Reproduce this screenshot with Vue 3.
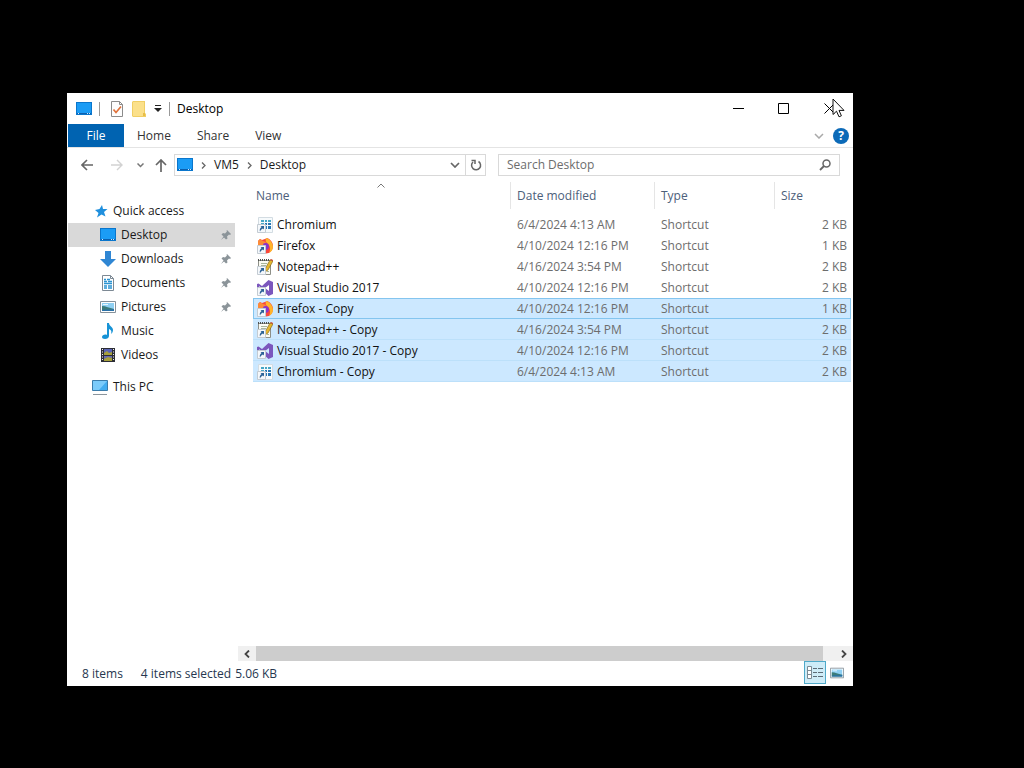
<script setup>
import { computed, ref } from "vue";

const tabs = ["Home", "Share", "View"];
const path = ["VM5", "Desktop"];

const places = [
  { name: "Desktop", icon: "desktop", pinned: true, active: true },
  { name: "Downloads", icon: "downloads", pinned: true },
  { name: "Documents", icon: "documents", pinned: true },
  { name: "Pictures", icon: "pictures", pinned: true },
  { name: "Music", icon: "music" },
  { name: "Videos", icon: "videos" },
];

const files = ref([
  { name: "Chromium", icon: "chromium", date: "6/4/2024 4:13 AM", size: 2 },
  { name: "Firefox", icon: "firefox", date: "4/10/2024 12:16 PM", size: 1 },
  { name: "Notepad++", icon: "notepad", date: "4/16/2024 3:54 PM", size: 2 },
  { name: "Visual Studio 2017", icon: "vs", date: "4/10/2024 12:16 PM", size: 2 },
  { name: "Firefox - Copy", icon: "firefox", date: "4/10/2024 12:16 PM", size: 1, selected: true, focused: true },
  { name: "Notepad++ - Copy", icon: "notepad", date: "4/16/2024 3:54 PM", size: 2, selected: true },
  { name: "Visual Studio 2017 - Copy", icon: "vs", date: "4/10/2024 12:16 PM", size: 2, selected: true },
  { name: "Chromium - Copy", icon: "chromium", date: "6/4/2024 4:13 AM", size: 2, selected: true },
]);

const search = ref("");
const selectedCount = computed(() => files.value.filter((f) => f.selected).length);

function select(file) {
  for (const f of files.value) {
    f.selected = f === file;
    f.focused = f === file;
  }
}
</script>

<template>
  <!-- shared icon shapes -->
  <svg class="sprite" aria-hidden="true">
    <symbol id="desktop" viewBox="0 0 16 16">
      <path d="M0 1h16v13H0z" fill="#0a76cc" />
      <path d="M1 2h14v10H1z" fill="#1b9cf5" />
      <path d="M1 12h14v1H1z" fill="#0b5fae" />
      <path d="M2 12h1v1H2zM11 12h1v1h-1zM13 12h1v1h-1z" fill="#cdeaff" />
    </symbol>
    <symbol id="downloads" viewBox="0 0 16 16">
      <path d="M5 0h6v8h5l-8 8-8-8h5z" fill="#2f86d3" />
    </symbol>
    <symbol id="documents" viewBox="0 0 16 16">
      <path d="M2.500.5h8l3 3v12h-11z" fill="#fff" stroke="#7d8994" />
      <path d="M10.500.5v3h3" fill="none" stroke="#7d8994" />
      <path d="M4 4.500h2M7 4.500h3M4 6.500h3M8 6.500h4M4 8.500h8M4 11h3M8 11h4M4 13h3M8 13h4" stroke="#2b93d1" stroke-width="1.300" />
    </symbol>
    <symbol id="pictures" viewBox="0 0 16 16">
      <path d="M.5 2.500h15v11H.5z" fill="#fff" stroke="#85919a" />
      <path d="M2 4h12v8H2z" fill="#8fd0f3" />
      <path d="M2 7c4 0 7 2 12 3v2H2z" fill="#3c7c7a" />
      <path d="M2 11c5-1 8 0 12-1v2H2z" fill="#2870a8" />
      <path d="M3 5h5v1H3z" fill="#eaf7fd" />
    </symbol>
    <symbol id="music" viewBox="0 0 16 16">
      <path d="M7 0h2c0 3 4 4 4 7 0 2-1 3-2 4 1-3 0-4-2-5v7c0 2-2 3-4 3s-3-1-3-2c0-2 3-3 5-2z" fill="#1793d6" />
    </symbol>
    <symbol id="videos" viewBox="0 0 16 16">
      <path d="M1 1h14v14H1z" fill="#2c2d35" />
      <path d="M4 2h8v6H4z" fill="#5a64b5" />
      <path d="M4 9h8v5H4z" fill="#676bb0" />
      <path d="M4 6l3-2 2 2 3-1v3H4zM4 12l4-2 4 1v3H4z" fill="#a6a03c" />
      <path d="M2.500 2v12M13.500 2v12" stroke="#f3f3f3" stroke-dasharray="1 1.500" />
    </symbol>
    <symbol id="pc" viewBox="0 0 16 16">
      <path d="M.5 1.500h15v10H.5z" fill="#43adf0" stroke="#3a7cab" />
      <path d="M1 2h14L7 11H1z" fill="#7bcbfa" />
      <path d="M1 15.500h14" stroke="#8b959c" />
    </symbol>
    <symbol id="star" viewBox="0 0 14 14">
      <path d="M8 1l1 4 4.500 0-3.500 3 1.500 4.500L7.500 10.500 3 13.500l1.500-4.500L1 6l4.500-1z" fill="#1f8fdd" />
    </symbol>
    <symbol id="pin" viewBox="0 0 12 12">
      <path d="M7 1l4 4-1 1-1-.5-2 2 .5 2L6 10.500 4 8.500 1 11l2.500-3.500-2-2L3 4l2 .5 2-2L6.500 2z" fill="#8b9499" />
    </symbol>
    <symbol id="shortcut" viewBox="0 0 16 16">
      <path d="M.5 7.500h8v8h-8z" fill="#f5f8fb" stroke="#c3cbd2" />
      <path d="M3.500 9H7v3.500L6 11.500c-1.500.5-2.500 1.500-3 3-.7-1.700 0-3.500 1.500-4.500z" fill="#2c6296" />
    </symbol>
    <symbol id="chromium" viewBox="0 0 16 16">
      <path d="M1.500.5h14v15h-14z" fill="#f6fafc" stroke="#d3dce2" />
      <path d="M4 3h3v2H4zM8 3h2v2H8zM11 3h3v2h-3zM4 6h3v2H4z" fill="#45a6c6" />
      <path d="M8 6h2v2H8zM11 6h3v2h-3zM8 9h2v3H8zM11 9h3v3h-3z" fill="#2776b4" />
      <use href="#shortcut" />
    </symbol>
    <symbol id="firefox" viewBox="0 0 16 16">
      <path d="M1 3l2-2 2 1c2-1 4-1 5-2 3 1 6 4 6 8s-3 7.500-7 7.500S1 13 1 8z" fill="#f8463c" />
      <path d="M9 0c4 1 7 5 7 9 0 3-2 5-4 6 2-4 1-7-1-9C9 4 8 3 9 0z" fill="#ffb52c" />
      <path d="M1 3l2-2 3 2 3 1-2 3H1z" fill="#fc8b38" />
      <path d="M6 6c2-2 6-1 6 2s-2 4-4 4z" fill="#8a35c9" />
      <use href="#shortcut" />
    </symbol>
    <symbol id="notepad" viewBox="0 0 16 16">
      <path d="M1.500 1.500h12v14h-12z" fill="#fbfbf3" stroke="#8d8f88" />
      <path d="M1 1h12" stroke="#4f5250" stroke-width="2" stroke-dasharray="1 1" />
      <path d="M4 4.500h6M4 6.500h5M10 12.500h2" stroke="#a9b69c" />
      <path d="M8 10l5-9 3 1-5 9-3 2z" fill="#e5b62f" stroke="#776018" stroke-width=".6" />
      <path d="M13 1l1-1 2 1v1z" fill="#c9442f" />
      <use href="#shortcut" />
    </symbol>
    <symbol id="vs" viewBox="0 0 16 16">
      <path d="M11.500 0L16 2v12l-4.500 2L5 10l-3.500 2.500L0 12V4l1.500-.5L5 6zM12 5L8 8l4 3zM2 6v4l2-2z" fill="#7b57bd" fill-rule="evenodd" />
      <use href="#shortcut" />
    </symbol>
  </svg>

  <div class="screen">
    <main class="window">
      <header class="titlebar">
        <svg class="icon"><use href="#desktop" /></svg>
        <span class="divider"></span>
        <button class="tool properties" aria-label="Properties">
          <svg width="14" height="16" viewBox="0 0 14 16">
            <path d="M1.500.5h8l3 3v12h-11z" fill="#fdfdfd" stroke="#8b8b8b" />
            <path d="M9.500.5v3h3" fill="none" stroke="#8b8b8b" />
            <path d="M3.500 8.500l2.500 3 5-6" fill="none" stroke="#e0713a" stroke-width="1.700" />
          </svg>
        </button>
        <button class="tool" aria-label="New folder">
          <svg width="14" height="16" viewBox="0 0 14 16">
            <path d="M0 1l1-1h12v12l1 1v3H1l-1-1z" fill="#f0ce63" />
            <path d="M1 1h11v14H1z" fill="#fbe08a" />
            <path d="M11 12h2v3h-2z" fill="#e8bd47" />
          </svg>
        </button>
        <button class="tool more" aria-label="Customize Quick Access Toolbar">
          <svg width="8" height="7" viewBox="0 0 8 7"><path d="M1 0h6v1H1zM0 3h8L4 7z" fill="#222" /></svg>
        </button>
        <span class="divider"></span>
        <h1>Desktop</h1>
        <div class="controls">
          <button aria-label="Minimize">
            <svg width="11" height="11"><path d="M0 5.500h11" stroke="#000" /></svg>
          </button>
          <button aria-label="Maximize">
            <svg width="11" height="11"><path d="M.5.5h10v10H.5z" fill="none" stroke="#000" /></svg>
          </button>
          <button aria-label="Close">
            <svg width="11" height="11"><path d="M.5.5l10 10M10.500.5l-10 10" stroke="#000" /></svg>
          </button>
        </div>
      </header>

      <nav class="ribbon">
        <button class="file">File</button>
        <button v-for="tab in tabs" :key="tab">{{ tab }}</button>
        <div class="ribbon-end">
          <button aria-label="Expand the Ribbon">
            <svg width="10" height="6" viewBox="0 0 10 6"><path d="M1 1l4 4 4-4" fill="none" stroke="#a9a9a9" stroke-width="1.500" /></svg>
          </button>
          <button class="help" aria-label="Help">?</button>
        </div>
      </nav>

      <div class="navbar">
        <div class="history">
          <button aria-label="Back">
            <svg width="12" height="12" viewBox="0 0 12 12"><path d="M12 6H1M6 1L1 6l5 5" fill="none" stroke="#666" stroke-width="1.600" /></svg>
          </button>
          <button aria-label="Forward">
            <svg width="12" height="12" viewBox="0 0 12 12"><path d="M0 6h11M6 1l5 5-5 5" fill="none" stroke="#d2d2d2" stroke-width="1.400" /></svg>
          </button>
          <button class="recent" aria-label="Recent locations">
            <svg width="7" height="5" viewBox="0 0 7 5"><path d="M.5.5l3 3 3-3" fill="none" stroke="#777" stroke-width="1.500" /></svg>
          </button>
          <button class="up" aria-label="Up">
            <svg width="12" height="13" viewBox="0 0 12 13"><path d="M6 13V1M1 6l5-5 5 5" fill="none" stroke="#666" stroke-width="1.700" /></svg>
          </button>
        </div>
        <div class="address">
          <svg class="icon"><use href="#desktop" /></svg>
          <template v-for="part in path" :key="part">
            <svg class="crumb" width="5" height="7" viewBox="0 0 5 7"><path d="M1 .5l3 3-3 3" fill="none" stroke="#666" stroke-width="1.300" /></svg>
            <a href="#">{{ part }}</a>
          </template>
          <button class="drop" aria-label="Previous locations">
            <svg width="10" height="6" viewBox="0 0 10 6"><path d="M1 1l4 4 4-4" fill="none" stroke="#666" stroke-width="1.700" /></svg>
          </button>
          <button class="refresh" aria-label="Refresh">
            <svg width="12" height="12" viewBox="0 0 12 12">
              <path d="M8.500 2.500A4.500 4.500 0 1 1 3 3" fill="none" stroke="#666" stroke-width="1.500" />
              <path d="M1.500 1.500H5V5" fill="none" stroke="#666" stroke-width="1.500" />
            </svg>
          </button>
        </div>
        <label class="search">
          <input v-model="search" type="text" placeholder="Search Desktop" aria-label="Search Desktop">
          <svg width="12" height="12" viewBox="0 0 12 12">
            <circle cx="7.500" cy="4.500" r="3.500" fill="none" stroke="#666" stroke-width="1.500" />
            <path d="M5 7L1 11" stroke="#666" stroke-width="1.800" />
          </svg>
        </label>
      </div>

      <div class="body">
        <aside class="sidebar">
          <a class="root quick" href="#"><svg class="star"><use href="#star" /></svg>Quick access</a>
          <a v-for="place in places" :key="place.name" href="#" :class="{ active: place.active }">
            <svg class="icon"><use :href="'#' + place.icon" /></svg>
            {{ place.name }}
            <svg v-if="place.pinned" class="pin"><use href="#pin" /></svg>
          </a>
          <a class="root pc" href="#"><svg class="icon"><use href="#pc" /></svg>This PC</a>
        </aside>

        <section class="content">
          <table>
            <thead>
              <tr>
                <th class="name">
                  Name
                  <svg class="sort" width="8" height="5" viewBox="0 0 8 5"><path d="M.5 4.500L4 1l3.500 3.500" fill="none" stroke="#777" /></svg>
                </th>
                <th class="date">Date modified</th>
                <th class="type">Type</th>
                <th>Size</th>
              </tr>
            </thead>
            <tbody>
              <tr
                v-for="file in files"
                :key="file.name"
                :class="{ selected: file.selected, focused: file.focused }"
                @click="select(file)"
              >
                <td><span class="file-name"><svg class="icon"><use :href="'#' + file.icon" /></svg>{{ file.name }}</span></td>
                <td>{{ file.date }}</td>
                <td>Shortcut</td>
                <td>{{ file.size }} KB</td>
              </tr>
            </tbody>
          </table>
          <div class="scrollbar">
            <button aria-label="Scroll left">
              <svg width="6" height="8" viewBox="0 0 6 8"><path d="M5 .5L1.500 4 5 7.500" fill="none" stroke="#444" stroke-width="1.800" /></svg>
            </button>
            <div class="track"><div class="thumb"></div></div>
            <button aria-label="Scroll right">
              <svg width="6" height="8" viewBox="0 0 6 8"><path d="M1 .5L4.500 4 1 7.500" fill="none" stroke="#444" stroke-width="1.800" /></svg>
            </button>
          </div>
        </section>
      </div>

      <footer class="status">
        <span>{{ files.length }} items</span>
        <span>{{ selectedCount }} items selected</span>
        <span class="total">5.06 KB</span>
        <div class="views">
          <button class="on" aria-label="Details view">
            <svg width="16" height="13" viewBox="0 0 16 13">
              <path d="M.5.5h4v12h-4zM.5 4.500h4M.5 8.500h4" fill="#fff" stroke="#7b8a94" />
              <path d="M6 2.500h4M11 2.500h5M6 6.500h4M11 6.500h5M6 10.500h4M11 10.500h5" stroke="#5d6c77" />
            </svg>
          </button>
          <button aria-label="Large icons view"><svg class="thumbs"><use href="#pictures" /></svg></button>
        </div>
      </footer>

      <svg class="cursor" width="13" height="20" viewBox="0 0 13 20">
        <path d="M1 1v15.500l3.500-3.300 2.500 5.600 2.400-1-2.400-5.400H12z" fill="#fff" stroke="#111" />
      </svg>
    </main>
  </div>
</template>

<style>
body {
  margin: 0;
  background: #000;
}
</style>

<style scoped>
.sprite {
  position: absolute;
  width: 0;
  height: 0;
}

.screen {
  box-sizing: border-box;
  display: flex;
  min-height: 100vh;
  padding: 93px 171px 82px 67px;
  background: #000;
  font-family: "Open Sans", "Noto Sans", sans-serif;
  font-size: 12px;
  line-height: 16px;
  color: #1a1a1a;
}

.window {
  position: relative;
  display: flex;
  flex-direction: column;
  flex: 1;
  min-width: 0;
  background: #fff;
}

button {
  display: flex;
  align-items: center;
  justify-content: center;
  padding: 0;
  border: 0;
  background: none;
  font: inherit;
  color: inherit;
}

a {
  color: inherit;
  text-decoration: none;
}

svg {
  flex: none;
}

.icon {
  width: 16px;
  height: 16px;
}

.titlebar {
  display: flex;
  align-items: center;
  height: 31px;
  padding-left: 9px;
}

.divider {
  width: 1px;
  height: 14px;
  margin: 0 7px;
  background: #999;
}

.tool {
  margin-right: 8px;
}

.properties {
  margin-left: 3px;
}

.more {
  margin-right: 0;
}

h1 {
  margin: 0;
  font-size: 12px;
  font-weight: normal;
  color: #000;
}

.controls {
  display: flex;
  height: 100%;
  margin-left: auto;
}

.controls button {
  width: 45px;
}

.controls button:last-child {
  width: 47px;
}

.ribbon {
  display: flex;
  height: 23px;
  padding-left: 1px;
  border-bottom: 1px solid #e4e4e4;
  color: #333;
}

.ribbon > button {
  padding: 0 13px;
}

.ribbon .file {
  width: 56px;
  background: #0063b1;
  color: #fff;
}

.ribbon-end {
  display: flex;
  align-items: center;
  gap: 9px;
  margin-left: auto;
  padding-right: 4px;
}

.help {
  width: 16px;
  height: 16px;
  border-radius: 50%;
  background: #0c6ab8;
  color: #fff;
  font-weight: bold;
}

.navbar {
  display: flex;
  align-items: center;
  height: 34px;
  padding-right: 13px;
}

.history {
  display: flex;
  align-items: center;
  width: 107px;
}

.history button {
  width: 30px;
}

.history button:first-child {
  margin-left: 5px;
}

.history .recent {
  width: 17px;
}

.history .up {
  width: 24px;
}

.address,
.search {
  box-sizing: border-box;
  display: flex;
  align-items: center;
  height: 22px;
  border: 1px solid #d9d9d9;
}

/* grow shares leave out each box's own border and padding */
.address {
  flex: 308 1 0;
  padding-left: 2px;
}

.crumb {
  margin: 0 8px;
}

.drop {
  width: 20px;
  height: 20px;
  margin-left: auto;
}

.refresh {
  width: 20px;
  height: 20px;
  border-left: 1px solid #d9d9d9;
}

.search {
  flex: 324 1 0;
  margin-left: 12px;
  padding: 0 8px;
}

.search input {
  flex: 1;
  min-width: 0;
  padding: 0;
  border: 0;
  outline: 0;
  background: none;
  font: inherit;
}

.search input::placeholder {
  color: #6d6d6d;
  opacity: 1;
}

.body {
  display: flex;
  flex: 1;
}

.sidebar {
  width: 167px;
  margin: 17px 3px 0 1px;
}

.sidebar a {
  box-sizing: border-box;
  display: flex;
  align-items: center;
  gap: 5px;
  height: 24px;
  padding: 0 3px 0 32px;
}

.sidebar .active {
  background: #d9d9d9;
}

.sidebar .root {
  padding-left: 24px;
}

.sidebar .quick {
  padding-left: 26px;
}

.sidebar .pc {
  margin-top: 8px;
}

.star {
  width: 14px;
  height: 14px;
}

.pin {
  width: 12px;
  height: 12px;
  margin-left: auto;
}

.content {
  display: flex;
  flex-direction: column;
  flex: 1;
  min-width: 0;
}

table {
  margin: 0 2px 0 15px;
  border-spacing: 0;
  table-layout: fixed;
}

th {
  position: relative;
  box-sizing: border-box;
  height: 32px;
  padding: 0 0 4px 6px;
  font-weight: normal;
  text-align: left;
  color: #4c607a;
}

th:not(:last-child) {
  background: linear-gradient(#e5e5e5, #e5e5e5) right top / 1px 27px no-repeat;
}

.name {
  width: 258px;
  padding-left: 3px;
}

.date {
  width: 144px;
}

.type {
  width: 120px;
}

.sort {
  position: absolute;
  top: 1px;
  left: 50%;
  margin-left: -5px;
}

td {
  box-sizing: border-box;
  height: 21px;
  padding: 0 0 0 6px;
  color: #6d6d6d;
  white-space: nowrap;
}

td:first-child {
  padding-left: 4px;
  color: #111;
}

td:last-child {
  padding-right: 4px;
  text-align: right;
}

.file-name {
  display: flex;
  align-items: center;
  gap: 4px;
}

.selected td {
  background: #cce8ff;
  box-shadow: inset 0 -1px #bce0fa;
}

.focused td {
  box-shadow: inset 0 1px #84c5ef, inset 0 -1px #84c5ef;
}

.focused td:first-child {
  box-shadow: inset 0 1px #84c5ef, inset 1px -1px #84c5ef;
}

.focused td:last-child {
  box-shadow: inset 0 1px #84c5ef, inset -1px -1px #84c5ef;
}

.scrollbar {
  display: flex;
  height: 15px;
  margin-top: auto;
  background: #f0f0f0;
}

.scrollbar button {
  width: 18px;
}

.track {
  flex: 1;
}

.thumb {
  width: 98%;
  height: 100%;
  background: #cdcdcd;
}

.status {
  display: flex;
  align-items: center;
  gap: 18px;
  height: 25px;
  padding-left: 15px;
  color: #26374f;
}

.total {
  margin-left: -14px;
}

.views {
  display: flex;
  height: 100%;
  margin-left: auto;
  padding-right: 5px;
}

.views button {
  box-sizing: border-box;
  width: 22px;
  height: 23px;
}

.views .on {
  border: 1px solid #4fa9c9;
  background: #ceecf8;
}

.thumbs {
  width: 14px;
  height: 14px;
}

.cursor {
  position: absolute;
  top: 5px;
  right: 8px;
}
</style>
